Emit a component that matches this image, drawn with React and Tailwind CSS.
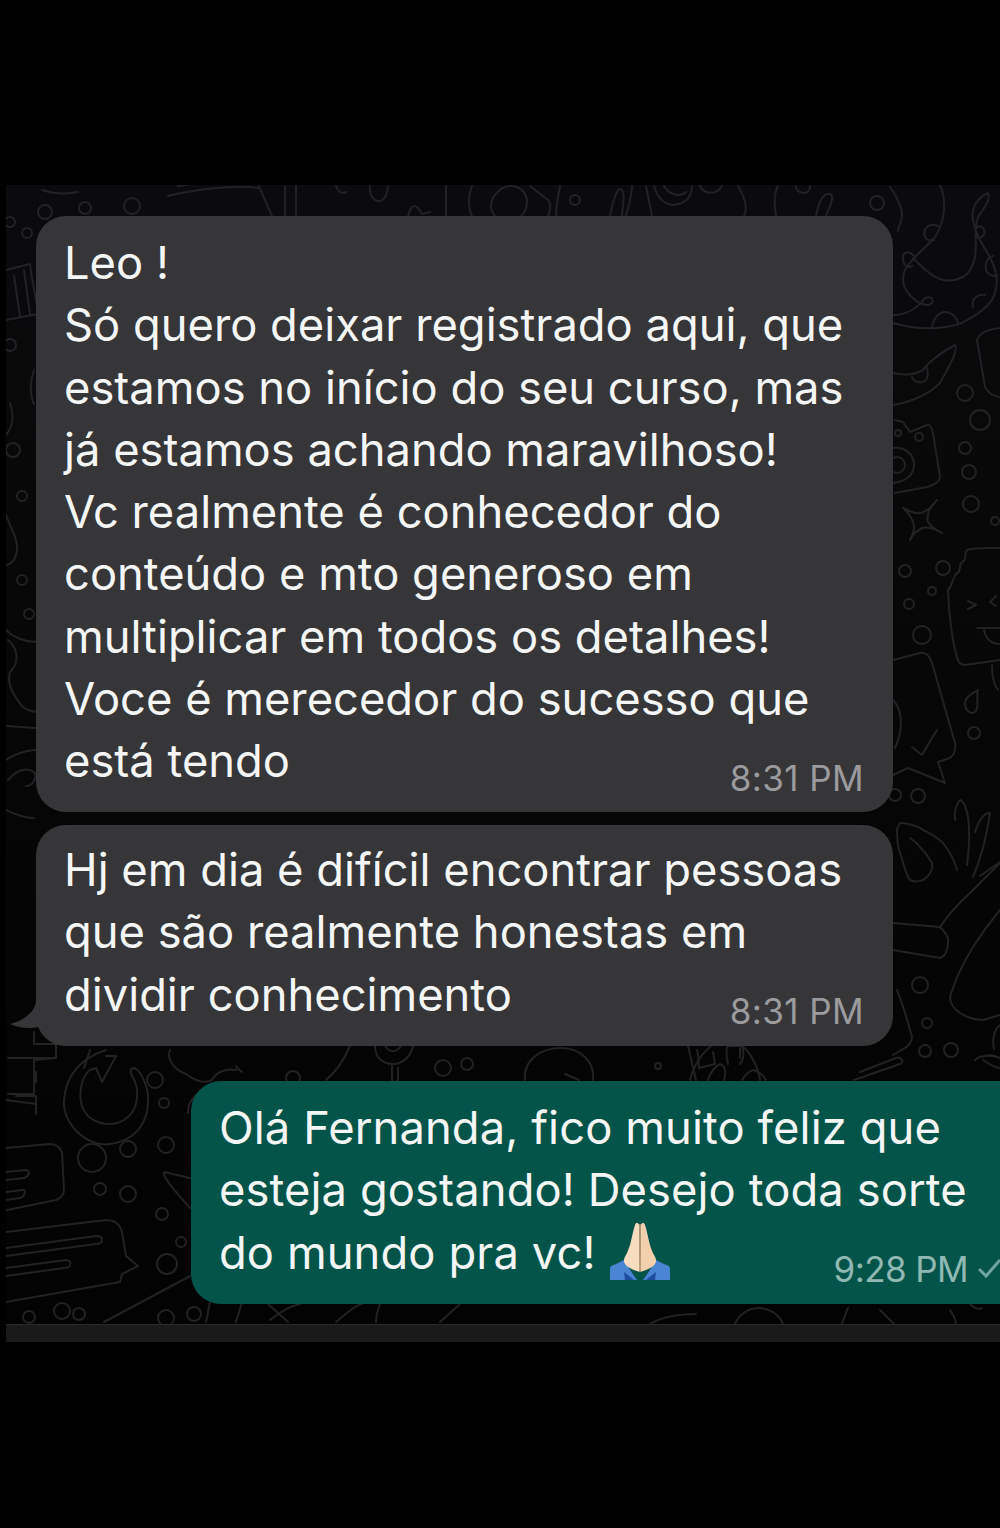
import React from 'react';

const circles = [
  [10, 222, 5], [27, 233, 5], [45, 212, 7], [85, 208, 6], [132, 206, 8], [10, 345, 6],
  [13, 450, 7], [22, 496, 5], [22, 580, 5], [29, 614, 5],
  [877, 203, 7], [965, 393, 8], [980, 420, 10], [965, 448, 6], [969, 472, 7], [971, 504, 8], [995, 521, 4],
  [905, 571, 6], [943, 568, 7], [932, 591, 4], [909, 604, 5], [922, 635, 9],
  [974, 733, 6], [895, 795, 6], [918, 796, 7],
  [920, 985, 8], [927, 1023, 5], [925, 1051, 6], [951, 1050, 7],
  [155, 1080, 8], [164, 1103, 5], [92, 1158, 14], [128, 1149, 8], [166, 1145, 8],
  [100, 1189, 6], [128, 1194, 8], [162, 1214, 6], [181, 1242, 5], [167, 1264, 10],
  [62, 1311, 8], [29, 1317, 6], [79, 1314, 6], [166, 1318, 8], [194, 1314, 7],
  [293, 1078, 7], [443, 1068, 8], [467, 1064, 6], [658, 1066, 3], [575, 200, 5],
  // camera lens and flash
  [897, 465, 8], [919, 437, 4], [898, 433, 3],
];

const paths = [
  // top left scrap
  'M178 186c24-4 56-6 80-2l14 32 M168 196c24-6 66-12 90-8 M285 186v30 M296 186v30',
  'M6 270l24-6c2 20 8 40 8 50l-32 6 M14 276l6 40 M24 270l6 44',
  'M42 190c12 4 26 4 36 2',
  // left strip
  'M34 370c-6 16-2 30 0 34 M10 403c4 12 4 22-4 32 M6 515c6 16 14 28 10 40-2 8-8 10-14 12',
  'M6 630c8 8 20 12 30 12 M8 640c12 10 10 24 2 32-4 12 4 24 12 34 6 6 14 6 18 6',
  'M6 726l30 2 M6 760c8-6 22-10 30-10 M8 780c10-12 20-12 26-8 4 6-2 14-8 14 M6 810c8 4 18 8 28 8',
  // top strip
  'M336 186c2 6 6 8 10 6 M370 186c-2 16 16 24 18 0 M408 216c4-14 8-12 14-2l8-2',
  'M446 186v30 M472 186c-4 10-4 22 0 30 M511 186c-10 0-20 10-20 20 0 10 10 16 18 16 10 0 18-10 18-20 0-8-6-16-16-16z',
  'M530 186l18 14c4 4 2 12 0 16 M560 186c-2 10-4 22-4 30 M610 216c4-20 8-30 12-26 4 4 0 18 0 26 M632 186c0 10-4 22-6 30',
  'M646 186l6 30 M654 186c4 14 14 22 24 18 10-2 14-10 14-18 M664 186c4 8 16 12 22 6 M700 186c4 8 16 10 22 0',
  'M738 186c6 10 10 22 6 30 M778 186c-6 10-2 30-2 30 M796 186c-2 6 14 12 14 0 M816 216c2-10 6-24 14-22 6 2-2 16-4 22',
  // moon top right
  'M890 187c6 8 12 20 12 28 0 8-4 12-4 16',
  'M940 185C947 200 945 222 935 237 C926 248 913 256 905 270 C900 282 905 292 915 300 C920 304 928 307 932 303 C934 298 930 296 925 298 C916 310 905 315 893 315',
  'M893 323C910 328 925 329 937 328 C950 327 960 325 967 320 C982 312 992 304 995 293 C998 282 997 276 995 270 C992 258 985 250 980 240 C975 230 971 220 973 210 C975 202 982 195 988 193 C991 200 984 208 978 217 C974 228 977 242 975 257 C973 268 968 274 963 277 C955 281 948 281 943 280 C934 278 925 270 913 258',
  'M914 256C908 250 903 252 903 258 C903 266 908 268 912 266 M934 240C926 242 923 236 925 230 C928 224 934 224 938 226',
  'M975 236C980 240 986 236 984 230 C982 224 977 226 975 230 M993 256C986 258 984 266 987 272 C990 276 994 276 997 276',
  'M973 307C971 298 978 294 985 295 M932 327C934 316 940 312 945 312 C952 312 957 318 958 323',
  // lower right curl
  'M893 373C903 375 912 376 923 370 C928 362 945 350 955 345 C959 349 950 365 940 383 C930 393 915 401 893 405 M912 377C914 382 920 384 925 381 C928 378 928 372 927 368',
  'M1000 328C990 329 980 332 977 340 L985 387C988 393 993 396 1000 397',
  // camera
  'M895 420L903 422 910 432 927 425C930 424 932 428 933 433L940 477C940 482 934 485 927 487L895 493',
  'M893 448C904 446 914 454 914 465 914 474 906 482 893 483',
  // star
  'M937 500Q925 512 928 522 932 528 942 533 930 526 922 528 914 532 910 540 916 528 913 522 910 514 903 508 914 514 921 513 930 510 937 500z',
  // popsicle
  'M1000 548C990 548 975 547 967 550 C963 554 968 560 962 562 C958 566 962 572 956 574 C952 580 952 586 948 590 C949 612 952 640 957 657 C958 662 960 665 965 665 L1000 660',
  'M968 601l8 4-8 4 M996 596l-6 6 6 4 M977 628h23 M984 630c2 10 8 14 16 14',
  'M992 665c0 10 2 20 6 25',
  // drop
  'M978 690C970 694 965 698 965 703 965 710 969 713 973 713 980 711 976 698 978 690z',
  // phone shape right of bubble 1
  'M893 660L920 653C926 652 930 657 932 663L955 743C956 750 954 755 950 758L938 762 945 783 908 768 893 775',
  'M912 747l10 8 13-22 M926 748l11-18',
  'M893 700c8 8 12 26 2 48',
  // hand bottom right
  'M897 830C898 825 900 822 903 823 C910 824 918 826 923 830 C932 834 938 838 943 843 C950 852 955 862 957 870',
  'M897 830C897 840 898 848 900 853 C904 864 906 876 910 880 C916 883 923 881 927 877 C932 872 933 868 932 863 C928 856 924 851 920 847 C917 843 913 840 910 838',
  'M967 865C969 850 970 830 968 817 C966 805 962 800 960 800 C956 805 954 812 955 820',
  'M973 877C980 860 985 845 990 813 C984 812 978 822 975 832 M980 876C986 872 994 866 1000 862',
  'M893 923L940 927 C945 932 948 936 948 940 948 950 946 956 940 958 L893 950 M940 927C950 912 960 902 970 893 L1000 863',
  'M1000 910C990 922 980 936 973 947 C965 960 955 980 950 997 C950 1004 955 1010 960 1013 C968 1018 976 1020 983 1020 L1000 1015',
  'M897 990C903 1005 908 1022 912 1037 C912 1042 908 1047 903 1049 L893 1055',
  'M1000 1025c-6 4-8 16-6 24 M975 1060c4-4 14-6 25-2 M983 1060c6 4 12 8 17 8 M985 1056c6-2 10 0 15 2',
  'M860 1072l36-14c5-2 9 4 4 6l-46 16',
  // below bubble 2
  'M90 1050l-6 18 M34 1032v12h22v14l-22 2v34H8 M34 1058h22v-4 M8 1058h30 M16 1096h20v18 M36 1072v10 M6 1100l30 4',
  'M106 1050c-24 8-40 24-42 50-2 24 24 48 46 44 28-4 40-24 38-50-2-12-8-24-14-26-4 0-4 4-2 8 8 12 8 34-8 44-14 8-36 4-42-14-4-14 0-30 8-36l6-2 6 14 14-26-10 0',
  'M170 1050c-4 8 4 20 16 24 8 6 18 10 26 6 4-8 14-12 24-10 M236 1066c2 4 4 4 6 6 M206 1090c6-6 14-6 22-4',
  'M196 1095c-6 6-8 10-8 18',
  'M6 1148l44-4c6 0 10 4 12 8l2 38c0 6-4 8-8 10l-58 12 M6 1172l20-2c4 0 4 6-2 8l-18 2 M6 1192l16-2c4-2 4 6-2 8l-14 2',
  'M6 1232l100-12c8 0 14 4 16 12l4 24 12 10-16 8-2 8-114 20 M6 1248l90-12c8 0 8 8 0 8l-90 12 M6 1268l60-8c6 0 6 8-2 8l-58 8',
  'M164 1172l26 6 M164 1172c-2 4 8 16 26 36',
  'M104 1322l90-48 M206 1322l4-20 M236 1322l6-20 M270 1320c10-8 20-14 30-16 M288 1322l-20-18',
  // between bubble 2 and 3
  'M350 1046c-6 14-14 26-24 34 M375 1046c0 12 8 18 18 18s18-8 20-18 M385 1046c4 6 10 8 16 0 M392 1064v16c0 3 3 4 6 0v-12',
  'M525 1080c-2-20 16-32 36-32 20 0 34 14 32 32 M565 1074l14 6',
  'M690 1080c4-16 14-30 24-36 M708 1080c2-8 8-14 12-16 6 2 6 10 4 16 M728 1064c-2-8-2-16 0-18h14c2 6 2 14-2 18 M742 1080c4-6 8-10 12-10 8 4 10 6 12 10 M760 1080c-2-14-10-28-18-34',
  'M688 1046l8 34 M697 1050c2 8 2 14 2 18l16-4-2-12 M740 1058v-10',
  // under bubble 3
  'M650 1324c10-6 24-10 46-10 M735 1324c4-10 14-16 24-16 10 0 20 6 24 16 M842 1324c2-6 4-12 6-16 M880 1310c6 6 10 10 14 14 M950 1310c4 6 6 12 6 14 M970 1304c4 4 8 6 12 4',
  'M336 1322c10-8 20-18 26-18 M380 1304c-4 10-4 14-4 18 M440 1322l20-18',
];

function Wallpaper() {
  return (
    <svg
      className="absolute inset-0 h-full w-full"
      viewBox="6 185 994 1157"
      fill="none"
      stroke="#222224"
      strokeWidth="2"
      strokeLinecap="round"
      strokeLinejoin="round"
    >
      {circles.map(([cx, cy, r], i) => (
        <circle key={i} cx={cx} cy={cy} r={r} />
      ))}
      {paths.map((d, i) => (
        <path key={i} d={d} />
      ))}
    </svg>
  );
}

function PrayingHands() {
  return (
    <svg className="ml-[14px] h-[58px] w-[60px] shrink-0 translate-y-[-2px]" viewBox="0 0 60 58">
      <path d="M0 58V47c0-3 3-4 6-5l8-4 10 16 3 4z" fill="#4a85d4" />
      <path d="M60 58V47c0-3-3-4-6-5l-8-4-10 16-3 4z" fill="#4a85d4" />
      <path d="M14 50l10 8h-9z" fill="#1d4d9c" />
      <path d="M46 50l-10 8h9z" fill="#1d4d9c" />
      <path d="M29.5 50C24 48 18 46 15 42 13 39 14 36 16 33 21 24 22 12 25 3c1-3 3-3 4 0z" fill="#f7dcc0" />
      <path d="M30.5 50C36 48 42 46 45 42 47 39 46 36 44 33 39 24 38 12 35 3c-1-3-3-3-4 0z" fill="#f2d0ae" />
      <path d="M30 2v47" stroke="#d8a67c" strokeWidth="1.5" />
    </svg>
  );
}

function Bubble({ lines, lastLine, time, className, timeClass, tick, children }) {
  return (
    <div className={`relative text-[45.3px] leading-[62.3px] text-[#f4f5f5] ${className}`}>
      {lines.map((line) => (
        <div key={line} className="whitespace-nowrap">{line}</div>
      ))}
      <div className="flex items-end justify-between whitespace-nowrap">
        <div className="flex items-center">
          {lastLine}
          {children}
        </div>
        <div className={`flex translate-y-[5px] items-center text-[35px] leading-[40px] ${timeClass}`}>
          {time}
          {tick}
        </div>
      </div>
    </div>
  );
}

export default function App() {
  return (
    <div className="h-[1528px] w-[1000px] overflow-hidden bg-black pt-[185px] font-['Inter','Noto_Sans',sans-serif]">
      <div className="relative ml-[6px] h-[1157px] bg-gradient-to-b from-[#0b0b0d] to-[#030303]">
        <Wallpaper />

        <div className="relative flex flex-col">
          <Bubble
            className="ml-[30px] mt-[31px] h-[596px] w-[857px] rounded-[30px] bg-[#363638] pl-[28px] pr-[29px] pt-[16px]"
            timeClass="tracking-[0.4px] text-[#9b9b9e]"
            lines={[
              'Leo !',
              'Só quero deixar registrado aqui, que',
              'estamos no início do seu curso, mas',
              'já estamos achando maravilhoso!',
              'Vc realmente é conhecedor do',
              'conteúdo e mto generoso em',
              'multiplicar em todos os detalhes!',
              'Voce é merecedor do sucesso que',
            ]}
            lastLine="está tendo"
            time="8:31 PM"
          />

          <Bubble
            className="ml-[30px] mt-[13px] h-[221px] w-[857px] rounded-[30px] bg-[#363638] pl-[28px] pr-[29px] pt-[14px]"
            timeClass="tracking-[0.4px] text-[#9b9b9e]"
            lines={[
              'Hj em dia é difícil encontrar pessoas',
              'que são realmente honestas em',
            ]}
            lastLine="dividir conhecimento"
            time="8:31 PM"
          />

          <Bubble
            className="ml-[185px] mt-[35px] h-[223px] w-[809px] rounded-l-[30px] bg-[#04544a] pl-[28px] pt-[16px] tracking-[0.1px]"
            timeClass="tracking-[-0.6px] text-[#8fb9b2]"
            lines={[
              'Olá Fernanda, fico muito feliz que',
              'esteja gostando! Desejo toda sorte',
            ]}
            lastLine="do mundo pra vc!"
            time="9:28 PM"
            tick={
              <svg className="ml-[10px] h-[20px] w-[22px]" viewBox="0 0 22 20" fill="none" stroke="#6fa49c" strokeWidth="3">
                <path d="M1 10l7 7L22 1" />
              </svg>
            }
          >
            <PrayingHands />
          </Bubble>

          {/* incoming bubble tail */}
          <svg className="absolute left-[4px] top-[810px] h-[52px] w-[50px]" viewBox="0 0 50 52">
            <path d="M26 5C26 15 16 25 0 29 8 33 20 34 28 32L46 50H50V5z" fill="#363638" />
          </svg>
        </div>

        <div className="absolute inset-x-0 bottom-0 h-[18px] border-t border-[#2a2a2a] bg-[#1a1a1a]" />
      </div>
    </div>
  );
}
